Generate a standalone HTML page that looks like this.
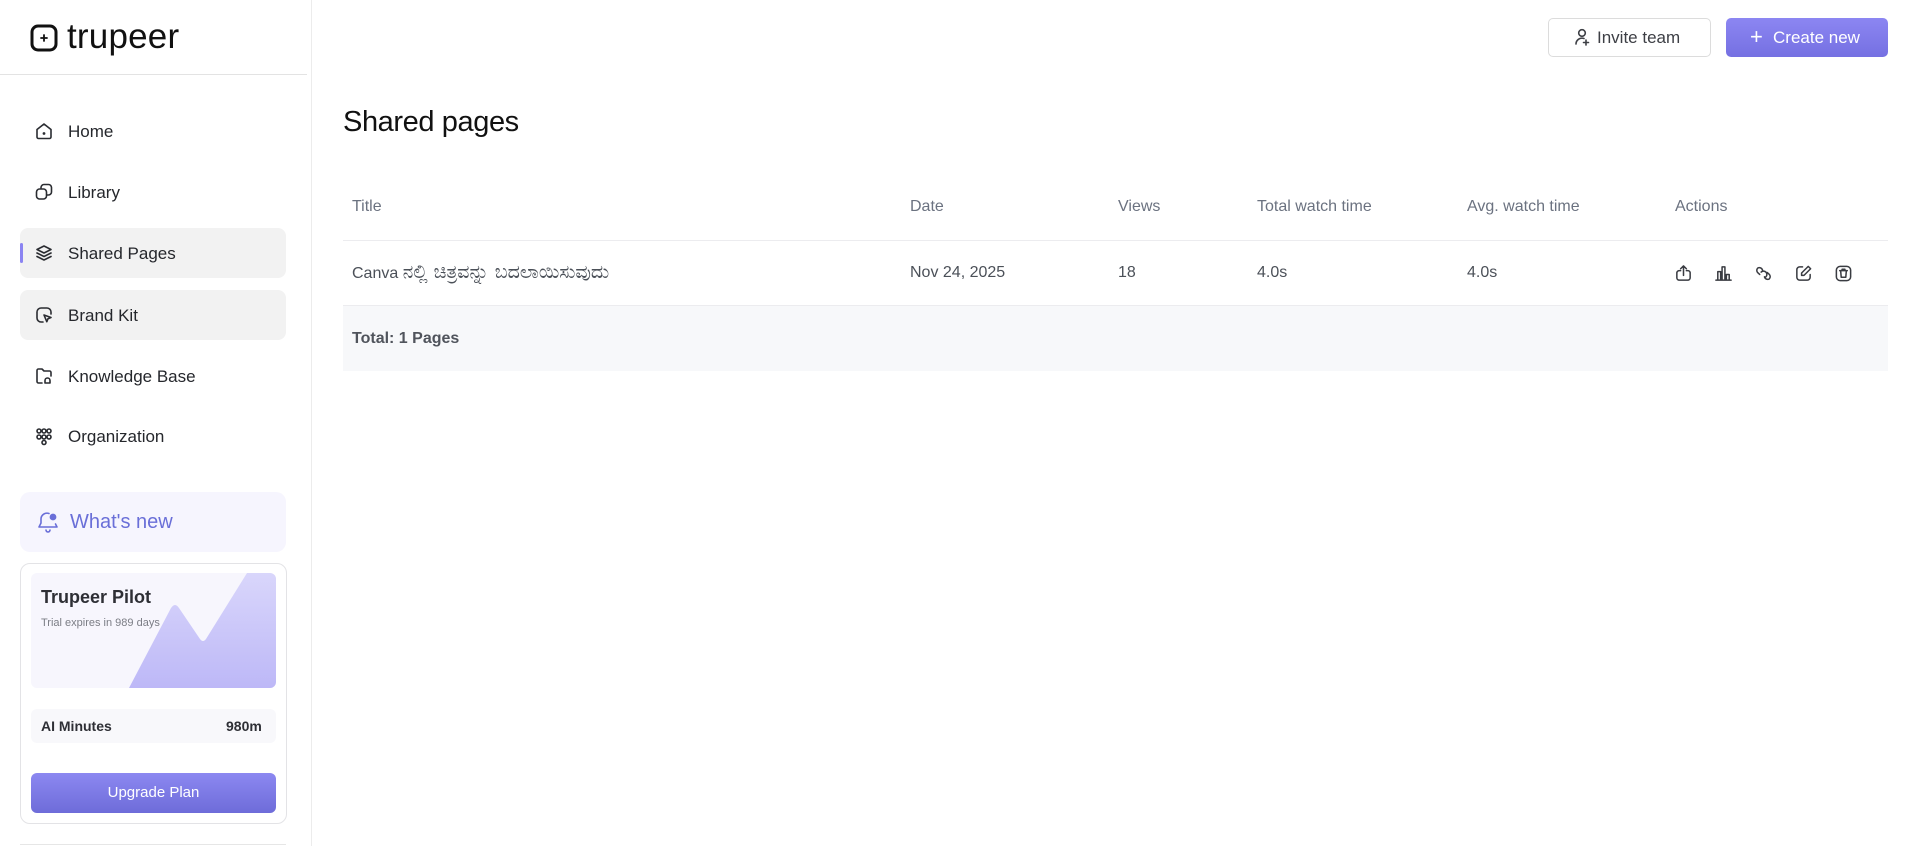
<!DOCTYPE html>
<html><head><meta charset="utf-8"><style>
*{box-sizing:border-box;margin:0;padding:0}
body{width:1920px;height:846px;overflow:hidden;background:#fff;font-family:"Liberation Sans","Noto Sans CJK SC",sans-serif;color:#1f2228;position:relative}
.abs{position:absolute}
.side{position:absolute;left:0;top:0;width:312px;height:846px;border-right:1px solid #ececec}
.nav{position:absolute;left:20px;width:266px;height:50px;border-radius:8px;display:flex;align-items:center;font-size:17px;color:#25272c}
.nav svg{position:absolute;left:14px}
.nav span{position:absolute;left:48px;top:16px}
.hl{background:#f2f2f2}
svg{fill:none;stroke:#2a2c31;stroke-width:1.6;stroke-linecap:round;stroke-linejoin:round}
.th{position:absolute;top:198px;font-size:16px;color:#6b7280}
.td{position:absolute;top:264px;font-size:16px;color:#4b5058}
</style></head><body>
<div class="side">
 <svg class="abs" style="left:30px;top:24px" width="28" height="28" viewBox="0 0 28 28"><rect x="2" y="2" width="24" height="24" rx="6" stroke="#111" stroke-width="3"/><path d="M14 11v6M11 14h6" stroke="#111" stroke-width="1.8"/></svg>
 <div class="abs" style="left:67px;top:17px;font-size:35px;color:#111;letter-spacing:0.2px">trupeer</div>
 <div class="abs" style="left:0;top:74px;width:307px;height:1px;background:#e3e3e3"></div>

 <div class="nav" style="top:106px"><svg width="20" height="20" viewBox="0 0 20 20"><path d="M3 8.5L10 3l7 5.5V16a1.5 1.5 0 0 1-1.5 1.5h-11A1.5 1.5 0 0 1 3 16z"/><circle cx="10" cy="12.5" r=".6" fill="#2a2c31"/></svg><span>Home</span></div>
 <div class="nav" style="top:167px"><svg width="20" height="20" viewBox="0 0 20 20"><rect x="2.5" y="7" width="10" height="10" rx="3"/><path d="M7 6V5.5a3 3 0 0 1 3-3h4.5a3 3 0 0 1 3 3V10a3 3 0 0 1-3 3H13"/></svg><span>Library</span></div>
 <div class="nav hl" style="top:228px"><svg width="20" height="20" viewBox="0 0 20 20"><path d="M10 3l7 3.5-7 3.5-7-3.5z"/><path d="M3 10l7 3.5 7-3.5M3 13.5l7 3.5 7-3.5"/></svg><span>Shared Pages</span></div>
 <div class="abs" style="left:20px;top:243px;width:3px;height:20px;border-radius:2px;background:#8b84f2"></div>
 <div class="nav hl" style="top:290px"><svg width="20" height="20" viewBox="0 0 20 20"><path d="M9 17H7a4 4 0 0 1-4-4V7a4 4 0 0 1 4-4h6a4 4 0 0 1 4 4v2"/><path d="M10 10l7 2.5-3 1.2-1.2 3z"/></svg><span>Brand Kit</span></div>
 <div class="nav" style="top:351px"><svg width="20" height="20" viewBox="0 0 20 20"><path d="M8 17H4.5A1.5 1.5 0 0 1 3 15.5v-11A1.5 1.5 0 0 1 4.5 3H8l2 2h5.5A1.5 1.5 0 0 1 17 6.5V10"/><path d="M11 17v-2.5a2.5 2.5 0 0 1 5 0V17z"/></svg><span>Knowledge Base</span></div>
 <div class="nav" style="top:411px"><svg width="20" height="20" viewBox="0 0 20 20"><circle cx="5" cy="5" r="2"/><circle cx="10" cy="5" r="2"/><circle cx="15" cy="5" r="2"/><circle cx="5" cy="11" r="2"/><circle cx="10" cy="11" r="2"/><circle cx="15" cy="11" r="2"/><circle cx="10" cy="16.5" r="2"/></svg><span>Organization</span></div>

 <div class="abs" style="left:20px;top:492px;width:266px;height:60px;border-radius:10px;background:#f6f5fe"></div>
 <svg class="abs" style="left:36px;top:510px;stroke:#6a6fd8" width="24" height="24" viewBox="0 0 24 24"><path d="M13 3.5A6 6 0 0 0 5 9v4l-2 4h18l-1.5-3"/><path d="M10 20a2 2 0 0 0 4 0"/><circle cx="17" cy="7" r="2.6" fill="#6a6fd8"/></svg>
 <div class="abs" style="left:70px;top:511px;font-size:20px;color:#6a6fd8">What's new</div>

 <div class="abs" style="left:20px;top:563px;width:267px;height:261px;border:1px solid #e3e3e6;border-radius:10px"></div>
 <div class="abs" style="left:31px;top:573px;width:245px;height:115px;border-radius:6px;background:#f7f6fd;overflow:hidden">
  <svg width="245" height="115" viewBox="0 0 245 115" style="stroke:none"><defs><linearGradient id="g" x1="0" y1="0" x2="0" y2="1"><stop offset="0" stop-color="#d9d6fb"/><stop offset="1" stop-color="#bdb8f7"/></linearGradient></defs><path d="M98 115L140 35Q144 29 148 35L169 66Q172 70 175 66L216 0H245V115z" fill="url(#g)"/></svg>
 </div>
 <div class="abs" style="left:41px;top:587px;font-size:18px;font-weight:bold;color:#2e2f35">Trupeer Pilot</div>
 <div class="abs" style="left:41px;top:617px;font-size:11px;color:#7b7d85">Trial expires in 989 days</div>
 <div class="abs" style="left:31px;top:709px;width:245px;height:34px;border-radius:6px;background:#f8f8fb"></div>
 <div class="abs" style="left:41px;top:718px;font-size:14px;font-weight:bold;color:#2e2f35">AI Minutes</div>
 <div class="abs" style="left:226px;top:718px;font-size:14px;font-weight:bold;color:#2e2f35">980m</div>
 <div class="abs" style="left:31px;top:773px;width:245px;height:40px;border-radius:6px;background:linear-gradient(#8c88f1,#6e6cd9);color:#fff;font-size:15px;text-align:center;line-height:40px">Upgrade Plan</div>
 <div class="abs" style="left:20px;top:844px;width:266px;height:1px;background:#e6e6e6"></div>
</div>

<div class="abs" style="left:1548px;top:18px;width:163px;height:39px;border:1px solid #dcdcdc;border-radius:5px;font-size:17px;color:#3d3f45;line-height:37px;padding-left:48px">Invite team</div>
<svg class="abs" style="left:1573px;top:28px;stroke:#3d3f45" width="18" height="18" viewBox="0 0 18 18"><circle cx="9" cy="5" r="3.3"/><path d="M3 16a6 6 0 0 1 8-5.5M13 12v5M10.5 14.5h5"/></svg>
<div class="abs" style="left:1726px;top:18px;width:162px;height:39px;border-radius:5px;background:linear-gradient(#8c86f2,#7570e2);color:#fff;font-size:17px;line-height:39px;padding-left:47px">Create new</div>
<div class="abs" style="left:1750px;top:25px;color:#fff;font-size:22px;line-height:24px">+</div>

<div class="abs" style="left:343px;top:106px;font-size:29px;color:#111;letter-spacing:-0.4px">Shared pages</div>

<div class="th" style="left:352px">Title</div>
<div class="th" style="left:910px">Date</div>
<div class="th" style="left:1118px">Views</div>
<div class="th" style="left:1257px">Total watch time</div>
<div class="th" style="left:1467px">Avg. watch time</div>
<div class="th" style="left:1675px">Actions</div>
<div class="abs" style="left:343px;top:240px;width:1545px;height:1px;background:#ececef"></div>
<div class="td" style="left:352px;top:261px;font-size:16px"><span>Canva </span><span style="font-size:19px;font-family:'DejaVu Sans',sans-serif">ನಲ್ಲಿ ಚಿತ್ರವನ್ನು ಬದಲಾಯಿಸುವುದು</span></div>
<div class="td" style="left:910px">Nov 24, 2025</div>
<div class="td" style="left:1118px">18</div>
<div class="td" style="left:1257px">4.0s</div>
<div class="td" style="left:1467px">4.0s</div>
<svg class="abs" style="left:1674px;top:264px;stroke:#3a3c42" width="19" height="19" viewBox="0 0 20 20"><path d="M7 7H5.5A2.5 2.5 0 0 0 3 9.5v5A2.5 2.5 0 0 0 5.5 17h9a2.5 2.5 0 0 0 2.5-2.5v-5A2.5 2.5 0 0 0 14.5 7H13M10 12V2M7 5l3-3 3 3"/></svg>
<svg class="abs" style="left:1714px;top:264px;stroke:#3a3c42" width="19" height="19" viewBox="0 0 20 20"><path d="M2 17h16M4 17V8h3v9M8.5 17V3h3v14M13 17v-6h3v6"/></svg>
<svg class="abs" style="left:1754px;top:264px;stroke:#3a3c42" width="19" height="19" viewBox="0 0 20 20"><path d="M9 6.5A3.5 3.5 0 0 0 4 4.2a3.5 3.5 0 0 0 0 5L6 11M11 13.5a3.5 3.5 0 0 0 5 2.3 3.5 3.5 0 0 0 0-5L14 9M7.5 8.5a3.5 3.5 0 0 1 5 0 3.5 3.5 0 0 1 0 5"/></svg>
<svg class="abs" style="left:1794px;top:264px;stroke:#3a3c42" width="19" height="19" viewBox="0 0 20 20"><path d="M9 3H6a3 3 0 0 0-3 3v8a3 3 0 0 0 3 3h8a3 3 0 0 0 3-3v-3"/><path d="M15 2.5l2.5 2.5-7 7H8v-2.5z"/></svg>
<svg class="abs" style="left:1834px;top:264px;stroke:#3a3c42" width="19" height="19" viewBox="0 0 20 20"><rect x="2.5" y="2.5" width="15" height="15" rx="4"/><path d="M6 7h8M8.5 7V5.5h3V7M7 7l.6 7h4.8L13 7"/></svg>
<div class="abs" style="left:343px;top:305px;width:1545px;height:66px;background:#f7f8fa;border-top:1px solid #ececef"></div>
<div class="abs" style="left:352px;top:330px;font-size:16px;font-weight:bold;color:#50545c">Total: 1 Pages</div>
</body></html>
